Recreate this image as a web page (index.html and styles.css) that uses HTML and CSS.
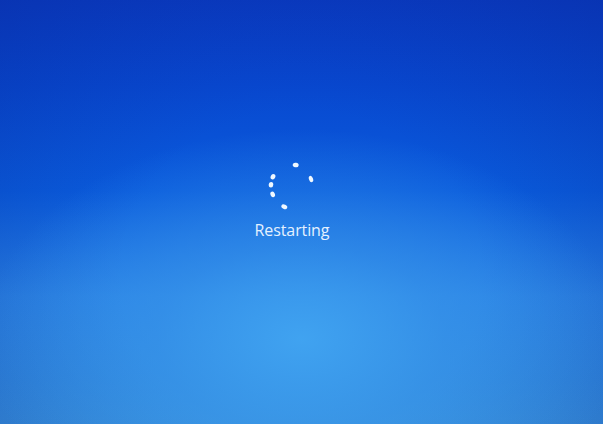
FILE: index.html
```html
<!DOCTYPE html>
<html lang="en">
<head>
<meta charset="utf-8">
<title>Restarting</title>
<link rel="stylesheet" href="styles.css">
</head>
<body>
<main class="screen">
  <div class="status">
    <svg class="spinner" width="50" height="50" viewBox="0 0 50 50" aria-hidden="true">
      <defs>
        <filter id="soft" x="-50%" y="-50%" width="200%" height="200%">
          <feGaussianBlur stdDeviation="0.55"/>
        </filter>
      </defs>
      <g fill="#f0f8ff" filter="url(#soft)">
        <ellipse rx="3" ry="2.3" transform="translate(28.7 4) rotate(10)"/>
        <ellipse rx="3.3" ry="2" transform="translate(44 18) rotate(70)"/>
        <ellipse rx="2.8" ry="2.3" transform="translate(6 15.7) rotate(116)"/>
        <ellipse rx="2.8" ry="2.3" transform="translate(4 23.7) rotate(93)"/>
        <ellipse rx="2.9" ry="2.2" transform="translate(5.7 33.3) rotate(67)"/>
        <ellipse rx="3.1" ry="2.2" transform="translate(17.3 45.7) rotate(25)"/>
      </g>
    </svg>
    <p class="label">Restarting</p>
  </div>
</main>
</body>
</html>
```
FILE: styles.css
```css
html, body {
  margin: 0;
  padding: 0;
  height: 100%;
}
body {
  overflow: hidden;
}
.screen {
  width: 603px;
  height: 424px;
  box-sizing: border-box;
  padding-top: 161px;
  display: flex;
  justify-content: center;
  background:
    radial-gradient(ellipse 320px 210px at 50% 80%, rgba(66, 166, 242, 0.9) 0%, rgba(58, 152, 236, 0.55) 45%, rgba(40, 120, 224, 0) 100%),
    radial-gradient(ellipse 85% 110% at 50% 65%, rgba(10, 50, 180, 0) 35%, rgba(6, 34, 140, 0.4) 100%),
    linear-gradient(180deg, #0a3cc4 0%, #0848d0 20%, #0a5bdc 45%, #2a82e4 70%, #3189de 90%, #3890dc 100%);
}
.status {
  display: flex;
  flex-direction: column;
  align-items: center;
  margin-right: 19px;
}
.spinner {
  display: block;
  width: 50px;
  height: 50px;
}
.label {
  margin: 9px 0 0;
  font-family: "Open Sans", "Noto Sans", "Liberation Sans", sans-serif;
  font-size: 16px;
  line-height: 20px;
  color: #e4f1ff;
  letter-spacing: -0.1px;
}
```
